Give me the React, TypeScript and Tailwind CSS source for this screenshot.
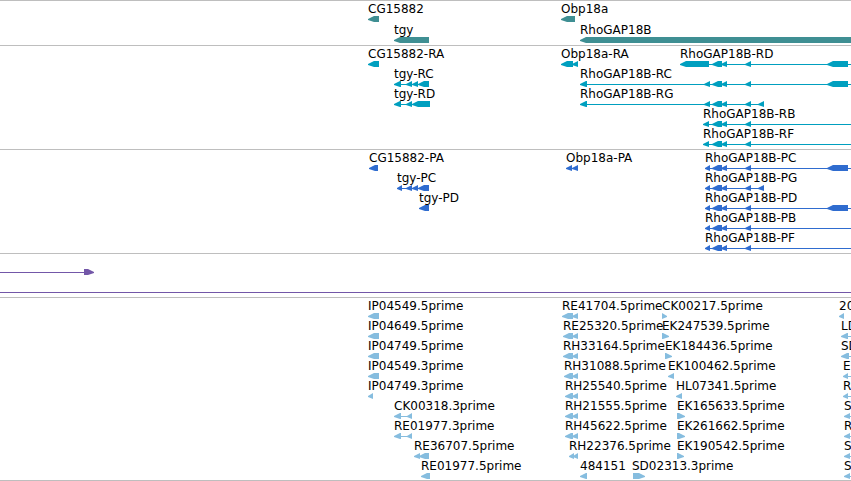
type Strand = 'left' | 'right'

type Feature = {
  name?: string
  start: number
  end?: number
  blocks: [number, number][]
  strand?: Strand
}

type Track = {
  id: string
  color: string
  rows: Feature[][]
  spacing: string
}

// Far enough to the right to run out of any window
const OPEN_END = 4000

const sharedExons: [number, number][] = [[712, 722], [721, 727], [745, 751]]
const lastExon: [number, number] = [827, 848]

const tracks: Track[] = [
  {
    id: 'Genes',
    color: 'text-[#3f8f93]',
    spacing: 'gap-px pb-0.5',
    rows: [
      [
        { name: 'CG15882', start: 368, blocks: [[368, 379]] },
        { name: 'Obp18a', start: 561, blocks: [[561, 575]] },
      ],
      [
        { name: 'tgy', start: 394, blocks: [[394, 429]] },
        { name: 'RhoGAP18B', start: 580, blocks: [[580, OPEN_END]] },
      ],
    ],
  },
  {
    id: 'Transcripts',
    color: 'text-[#009fbf]',
    spacing: 'pb-0.5',
    rows: [
      [
        { name: 'CG15882-RA', start: 368, blocks: [[368, 379]] },
        { name: 'Obp18a-RA', start: 561, blocks: [[561, 573], [572, 578]] },
        { name: 'RhoGAP18B-RD', start: 680, end: OPEN_END, blocks: [[680, 709], ...sharedExons, lastExon] },
      ],
      [
        { name: 'tgy-RC', start: 394, blocks: [[394, 401], [406, 412], [412, 418], [418, 429]] },
        { name: 'RhoGAP18B-RC', start: 580, end: OPEN_END, blocks: [[580, 587], [704, 710], ...sharedExons, lastExon] },
      ],
      [
        { name: 'tgy-RD', start: 394, blocks: [[394, 401], [406, 412], [412, 430]] },
        { name: 'RhoGAP18B-RG', start: 580, blocks: [[580, 587], [704, 710], ...sharedExons, [758, 764]] },
      ],
      [{ name: 'RhoGAP18B-RB', start: 703, end: OPEN_END, blocks: [[703, 709], ...sharedExons] }],
      [{ name: 'RhoGAP18B-RF', start: 703, end: OPEN_END, blocks: [[703, 709], ...sharedExons] }],
    ],
  },
  {
    id: 'Proteins',
    color: 'text-[#2f6ccf]',
    spacing: 'pb-0.5',
    rows: [
      [
        { name: 'CG15882-PA', start: 369, blocks: [[369, 378]] },
        { name: 'Obp18a-PA', start: 566, blocks: [[566, 572], [572, 578]] },
        { name: 'RhoGAP18B-PC', start: 705, end: OPEN_END, blocks: [[705, 710], ...sharedExons, lastExon] },
      ],
      [
        { name: 'tgy-PC', start: 397, blocks: [[397, 402], [406, 412], [412, 418], [418, 429]] },
        { name: 'RhoGAP18B-PG', start: 705, blocks: [[705, 710], ...sharedExons, [758, 764]] },
      ],
      [
        { name: 'tgy-PD', start: 419, blocks: [[419, 429]] },
        { name: 'RhoGAP18B-PD', start: 705, end: OPEN_END, blocks: [[705, 710], ...sharedExons, lastExon] },
      ],
      [{ name: 'RhoGAP18B-PB', start: 705, end: OPEN_END, blocks: [[705, 710], ...sharedExons] }],
      [{ name: 'RhoGAP18B-PF', start: 705, end: OPEN_END, blocks: [[705, 710], ...sharedExons] }],
    ],
  },
  {
    id: 'Predictions',
    color: 'text-[#7357a8]',
    spacing: 'pb-0.5',
    rows: [
      [{ start: 0, blocks: [[84, 94]], strand: 'right' }],
      [{ start: 0, end: OPEN_END, blocks: [] }],
    ],
  },
  {
    id: 'ESTs',
    color: 'text-[#86bddf]',
    spacing: 'border-b pb-px',
    rows: [
      [
        { name: 'IP04549.5prime', start: 368, blocks: [[368, 379]] },
        { name: 'RE41704.5prime', start: 562, blocks: [[562, 573], [572, 578]] },
        { name: 'CK00217.5prime', start: 662, blocks: [[662, 667]], strand: 'right' },
        { name: '20', start: 839, blocks: [[839, 844]] },
      ],
      [
        { name: 'IP04649.5prime', start: 368, blocks: [[368, 379]] },
        { name: 'RE25320.5prime', start: 563, blocks: [[563, 573], [572, 578]] },
        { name: 'EK247539.5prime', start: 662, blocks: [[662, 669]], strand: 'right' },
        { name: 'LD', start: 841, end: OPEN_END, blocks: [[841, 848]] },
      ],
      [
        { name: 'IP04749.5prime', start: 368, blocks: [[368, 379]] },
        { name: 'RH33164.5prime', start: 563, blocks: [[563, 573], [572, 578]] },
        { name: 'EK184436.5prime', start: 665, blocks: [[665, 672]], strand: 'right' },
        { name: 'SD', start: 841, end: OPEN_END, blocks: [[841, 849]] },
      ],
      [
        { name: 'IP04549.3prime', start: 368, blocks: [[368, 379]] },
        { name: 'RH31088.5prime', start: 564, blocks: [[564, 573], [572, 578]] },
        { name: 'EK100462.5prime', start: 668, blocks: [[668, 674]] },
        { name: 'E', start: 843, end: OPEN_END, blocks: [[843, 848]] },
      ],
      [
        { name: 'IP04749.3prime', start: 368, blocks: [[368, 373]] },
        { name: 'RH25540.5prime', start: 565, blocks: [[565, 573], [572, 578]] },
        { name: 'HL07341.5prime', start: 676, blocks: [[676, 682]] },
        { name: 'R', start: 843, end: OPEN_END, blocks: [[843, 848]] },
      ],
      [
        { name: 'CK00318.3prime', start: 394, blocks: [[394, 401], [407, 412]] },
        { name: 'RH21555.5prime', start: 565, blocks: [[565, 573], [572, 578]] },
        { name: 'EK165633.5prime', start: 677, blocks: [[677, 685]], strand: 'right' },
        { name: 'S', start: 844, end: OPEN_END, blocks: [[844, 850]] },
      ],
      [
        { name: 'RE01977.3prime', start: 394, blocks: [[394, 401], [407, 412]] },
        { name: 'RH45622.5prime', start: 565, blocks: [[565, 573], [572, 578]] },
        { name: 'EK261662.5prime', start: 677, blocks: [[677, 685]], strand: 'right' },
        { name: 'R', start: 844, end: OPEN_END, blocks: [[844, 850]] },
      ],
      [
        { name: 'RE36707.5prime', start: 414, blocks: [[414, 420], [419, 429]] },
        { name: 'RH22376.5prime', start: 569, blocks: [[569, 574], [573, 578]] },
        { name: 'EK190542.5prime', start: 677, blocks: [[677, 684]], strand: 'right' },
        { name: 'S', start: 844, end: OPEN_END, blocks: [[844, 850]] },
      ],
      [
        { name: 'RE01977.5prime', start: 421, blocks: [[421, 430]] },
        { name: '484151', start: 580, blocks: [[580, 587]] },
        { name: 'SD02313.3prime', start: 632, blocks: [[633, 645]], strand: 'right' },
        { name: 'S', start: 844, end: OPEN_END, blocks: [[844, 850]] },
      ],
    ],
  },
]

// The tip is one pixel tall, on the same row as the connecting line
function blockPoints(from: number, to: number, strand: Strand) {
  const head = Math.min(6, to - from)
  if (strand === 'left') {
    return `${from},3 ${from + head},0 ${to},0 ${to},6 ${from + head},6 ${from},4`
  }
  return `${to},3 ${to - head},0 ${from},0 ${from},6 ${to - head},6 ${to},4`
}

function Glyph({ feature }: { feature: Feature }) {
  const { start, blocks, strand = 'left' } = feature
  const end = feature.end ?? blocks[blocks.length - 1][1]
  const hasLine = feature.end !== undefined || blocks.length > 1 || blocks[0][0] - start > 1

  return (
    <svg width={end - start} height={6} className="block max-w-none fill-current" aria-hidden="true">
      {hasLine && <rect x={0} y={3} width={end - start} height={1} />}
      {blocks.map(([from, to]) => (
        <polygon key={from} points={blockPoints(from - start, to - start, strand)} />
      ))}
    </svg>
  )
}

function TrackRow({ features }: { features: Feature[] }) {
  return (
    <div className="relative h-5">
      {features.map((feature) => (
        <div key={feature.start} className="absolute" style={{ left: feature.start }}>
          <div className="h-3.5 whitespace-nowrap text-black">{feature.name}</div>
          <Glyph feature={feature} />
        </div>
      ))}
    </div>
  )
}

export default function App() {
  return (
    <main className="w-full overflow-hidden bg-white font-['DejaVu_Sans',sans-serif] text-[12px] leading-3.5">
      {tracks.map((track) => (
        <section
          key={track.id}
          aria-label={track.id}
          className={`flex flex-col border-t border-[#bebebe] pt-px ${track.spacing} ${track.color}`}
        >
          {track.rows.map((features, i) => (
            <TrackRow key={i} features={features} />
          ))}
        </section>
      ))}
    </main>
  )
}
